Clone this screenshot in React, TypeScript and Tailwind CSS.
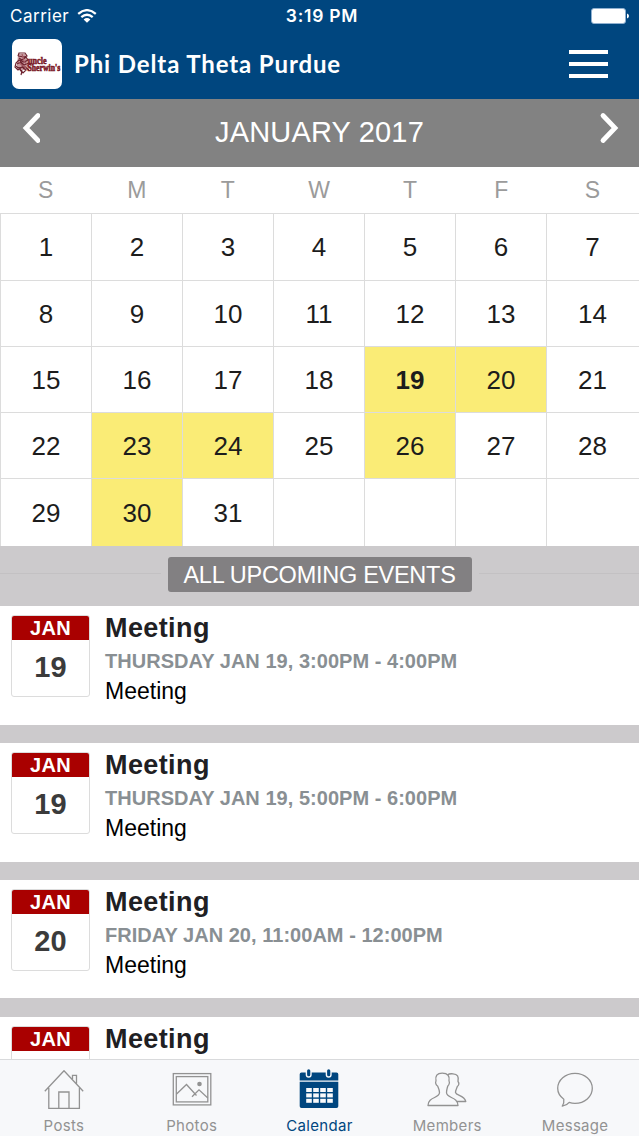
import React from "react";

const WEEKDAYS = ["S", "M", "T", "W", "T", "F", "S"];
const EVENT_DAYS = [19, 20, 23, 24, 26, 30];
const TODAY = 19;

const EVENTS = [
  { day: "19", when: "THURSDAY JAN 19, 3:00PM - 4:00PM" },
  { day: "19", when: "THURSDAY JAN 19, 5:00PM - 6:00PM" },
  { day: "20", when: "FRIDAY JAN 20, 11:00AM - 12:00PM" },
  { day: "23", when: "MONDAY JAN 23, 3:00PM - 4:00PM" },
];

function StatusBar() {
  return (
    <div className="grid h-8 grid-cols-3 items-center pr-[10px] pl-[10px] font-['Inter',sans-serif] text-[17px] text-white">
      <div className="flex items-center">
        <span className="w-[60px] text-[17px] leading-8 tracking-[0.5px] whitespace-nowrap">Carrier</span>
        <svg className="ml-[7px] h-[15px] w-[20px]" viewBox="0 0 20 15" fill="none" stroke="currentColor" strokeWidth="2.3">
          <path d="M1.2 4.9Q10-2.6 18.8 4.9" />
          <path d="M4.3 8.2Q10 3.4 15.7 8.2" />
          <path d="M10 13.8L6.6 10.5Q10 7.6 13.4 10.5Z" fill="currentColor" stroke="none" />
        </svg>
      </div>
      <div className="pl-[5px] text-center text-[17.5px] font-semibold tracking-[0.75px] whitespace-nowrap">3:19 PM</div>
      <div className="flex items-center justify-end">
        <svg className="h-4 w-[38px]" viewBox="0 0 38 16">
          <rect x="0.5" y="0.5" width="34" height="15" rx="2.5" fill="#fff" stroke="#8fb0d0" />
          <path d="M36 5.5Q38 6.2 38 8T36 10.5Z" fill="#fff" />
        </svg>
      </div>
    </div>
  );
}

function Logo() {
  return (
    <svg className="h-[50px] w-[50px]" viewBox="0 0 50 50">
      <rect width="50" height="50" rx="7" fill="#fff" />
      <path d="M6 15H13L15 20L18 24L16 31L10 31L5 27Z" fill="#c99ba0" />
      <g fill="none" stroke="#6e2430" strokeWidth="1.2">
        <path d="M6 17L7 14L13 14L15 17L12 18L6 17M7 19L10 21L14 18L16 21L12 23L7 21L4 24L3 28L6 31L10 28L14 31L11 34L8 31" />
        <path d="M5 25L9 23L12 26L17 24M5 29L13 28L17 31M8 21L12 30M4 27L10 32L9 36" />
        <path d="M10 15L12 22L16 27M6 23L14 29" stroke="#a45a63" />
      </g>
      <g fill="#7b1826" stroke="#7b1826" strokeWidth="0.6" className="font-['Liberation_Serif',serif] font-bold">
        <text transform="translate(16 25) scale(0.78 1)" fontSize="10.5">uncle</text>
        <text transform="translate(15.5 31.8) scale(0.8 1)" fontSize="9.7">Sherwin's</text>
      </g>
    </svg>
  );
}

function Header() {
  return (
    <header className="h-[99px] shrink-0 bg-[#00467f]">
      <StatusBar />
      <div className="flex h-[63px] items-center pr-[31px] pl-3">
        <Logo />
        <h1 className="ml-[12px] flex-1 font-['Lato',sans-serif] text-[24px] font-bold tracking-[0.88px] whitespace-nowrap text-white">
          Phi Delta Theta Purdue
        </h1>
        <div className="flex w-[39px] flex-col gap-[8px]">
          <span className="h-[4px] bg-white" />
          <span className="h-[4px] bg-white" />
          <span className="h-[4px] bg-white" />
        </div>
      </div>
    </header>
  );
}

function Chevron({ right = false }: { right?: boolean }) {
  return (
    <svg className="h-[32px] w-[20px]" viewBox="0 0 20 32" fill="none" stroke="#fff" strokeWidth="4.8" strokeLinecap="round" strokeLinejoin="miter">
      <path d={right ? "M4 3.5L16 16L4 28.5" : "M18 3.5L6 16L18 28.5"} />
    </svg>
  );
}

function MonthBar() {
  return (
    <div className="flex h-[68px] shrink-0 items-center justify-between bg-[#828282] px-[20px] text-white">
      <div className="pb-[11px]"><Chevron /></div>
      <h2 className="pb-[2px] text-[29px] leading-[64px] tracking-[0.17px]">JANUARY 2017</h2>
      <div className="pb-[11px]"><Chevron right /></div>
    </div>
  );
}

function MonthGrid() {
  const cells = Array.from({ length: 35 }, (_, i) => i + 1);
  return (
    <div className="shrink-0 bg-white">
      <div className="grid h-[46px] grid-cols-7 pr-px text-center text-[23px] leading-[46px] text-[#9b9b9b]">
        {WEEKDAYS.map((d, i) => (
          <div key={i}>{d}</div>
        ))}
      </div>
      <div className="grid h-[333px] grid-cols-[91px_91px_91px_91px_91px_91px_92px] grid-rows-[67px_66px_66px_66px_67px] border-t border-l border-[#dcdcdc]">
        {cells.map((n) => (
          <div
            key={n}
            className={[
              "flex items-center justify-center border-[#dcdcdc] pt-px text-[26px] text-[#1c1c1c]",
              n % 7 === 0 ? "pr-px" : "border-r",
              n > 28 ? "" : "border-b",
              EVENT_DAYS.includes(n) ? "bg-[#faec76]" : "",
              n === TODAY ? "font-bold" : "",
            ].join(" ")}
          >
            {n <= 31 ? n : ""}
          </div>
        ))}
      </div>
    </div>
  );
}

function UpcomingBar() {
  return (
    <div className="flex h-[60.4px] shrink-0 items-center gap-[7px]">
      <span className="mb-[5px] h-px flex-1 bg-[#c3c1c3]" />
      <span className="mb-[3px] h-[35px] w-[304px] rounded-[3px] bg-[#828082] text-center text-[23.5px] leading-[36px] tracking-[-0.27px] text-white">
        ALL UPCOMING EVENTS
      </span>
      <span className="mb-[5px] h-px flex-1 bg-[#c3c1c3]" />
    </div>
  );
}

function EventCard({ day, when }: { day: string; when: string }) {
  return (
    <article className="flex h-[118.5px] shrink-0 bg-white pt-[9px] pl-[11px]">
      <div className="h-[82px] w-[79px] shrink-0 overflow-hidden rounded-[3px] border border-[#dcdcdc] text-center font-bold">
        <div className="-mx-px -mt-px h-[25px] bg-[#a90000] text-[20px] leading-[27px] tracking-[0.3px] text-white">JAN</div>
        <div className="text-[29px] leading-[54px] text-[#3b3b3b]">{day}</div>
      </div>
      <div className="ml-[15px] whitespace-nowrap">
        <h3 className="-mt-px text-[27px] leading-[28px] font-bold tracking-[0.4px] text-[#202023]">Meeting</h3>
        <p className="mt-[4px] text-[20px] leading-[30px] font-bold tracking-[0.03px] text-[#898f93]">{when}</p>
        <p className="text-[23px] leading-[30px] text-black">Meeting</p>
      </div>
    </article>
  );
}

function HomeIcon() {
  return (
    <svg className="h-10 w-10" viewBox="0 0 40 40" fill="none" stroke="currentColor" strokeWidth="1.3">
      <path d="M.8 22.3L20 1.8L39.2 22.3M4.8 19V39.4H35.4V19M14.8 39.4V23H25V39.4M28.5 10V6.4H32.5V14.5" />
    </svg>
  );
}

function PhotoIcon() {
  return (
    <svg className="h-10 w-10" viewBox="0 0 40 40" fill="none" stroke="currentColor" strokeWidth="1.3">
      <rect x="1.3" y="4.6" width="37.5" height="31.3" />
      <rect x="4.3" y="7.6" width="31.5" height="25.3" />
      <path d="M4.3 25.3L14.5 15.5L24.5 26.5M20 27.8L27 20.8L35.8 29M20 27.8L22.3 25.5" />
      <circle cx="27.5" cy="15" r="2.3" fill="currentColor" stroke="none" />
    </svg>
  );
}

function CalendarIcon() {
  const xs = [7.2, 14.2, 21.2, 28.2];
  const ys = [19, 24.4, 29.8];
  return (
    <svg className="h-10 w-10" viewBox="0 0 40 40" fill="#00467f">
      <path d="M2.5 3.5H37.5Q39.3 3.5 39.3 5.3V11.5H.7V5.3Q.7 3.5 2.5 3.5ZM.7 12.8H39.3V37.3Q39.3 39 37.5 39H2.5Q.7 39 .7 37.3Z" />
      <path d="M9.7 2V5.7M29.7 2V5.7" stroke="#f8f8fa" strokeWidth="6" strokeLinecap="round" />
      <path d="M9.7 1.8V5.7M29.7 1.8V5.7" stroke="#00467f" strokeWidth="3.2" strokeLinecap="round" />
      <g fill="#fafafb">
        {ys.map((y) => xs.map((x) => <rect key={`${x}-${y}`} x={x} y={y} width="5.6" height="4" />))}
      </g>
    </svg>
  );
}

function MembersIcon() {
  return (
    <svg className="h-10 w-10" viewBox="0 0 40 40" fill="none" stroke="currentColor" strokeWidth="1.3" strokeLinejoin="round">
      <path d="M9 12C8 7 10 4.2 15.2 4.2C20.8 4.2 23 7 22 12C23 13.5 22 16 20.8 17C20 20 19.5 21 19.5 23.5C19.5 29.5 31 27.5 31 36.5H1C1 27.5 12.5 29.5 12.5 23.5C12.5 21 11.5 19.5 10.6 17C9 16 8 13.5 9 12Z" />
      <path d="M20.8 5.8C22 4.4 24 4.8 26 4.8C30.5 5 32 7.5 31 12.5C32.5 14.5 31.5 16.5 30.3 17.5C29.5 20 28.5 21 28.5 23.5C29.5 27 37 26 38.8 32.5H30" />
    </svg>
  );
}

function MessageIcon() {
  return (
    <svg className="h-10 w-10" viewBox="0 0 40 40" fill="none" stroke="currentColor" strokeWidth="1.3" strokeLinejoin="round">
      <path d="M20 4.3C29.7 4.3 37.3 11 37.3 19.3C37.3 27.6 29.7 34.3 20 34.3C18 34.3 16 34 14.2 33.3C12 36 10.3 36.7 7.3 37.2C8.6 35.2 9.2 33 8.8 30.2C5 27.5 2.7 23.7 2.7 19.3C2.7 11 10.3 4.3 20 4.3Z" />
    </svg>
  );
}

const TABS = [
  { label: "Posts", icon: HomeIcon },
  { label: "Photos", icon: PhotoIcon },
  { label: "Calendar", icon: CalendarIcon },
  { label: "Members", icon: MembersIcon },
  { label: "Message", icon: MessageIcon },
];

function TabBar() {
  return (
    <nav className="grid h-[77px] shrink-0 grid-cols-5 border-t border-[#d9dadc] bg-[#f7f8fa]">
      {TABS.map(({ label, icon: Icon }) => (
        <div
          key={label}
          className={`flex flex-col items-center pt-[9px] font-['Inter',sans-serif] ${label === "Calendar" ? "text-[#00467f]" : "text-[#929292]"}`}
        >
          <Icon />
          <span className="mt-[6px] text-[15px] leading-[22px] tracking-[0.3px]">{label}</span>
        </div>
      ))}
    </nav>
  );
}

export default function App() {
  return (
    <div className="flex h-[1136px] w-[639px] flex-col overflow-hidden bg-[#cccacc] font-['Liberation_Sans',Arial,sans-serif]">
      <Header />
      <MonthBar />
      <MonthGrid />
      <UpcomingBar />
      <main className="flex min-h-0 flex-1 flex-col gap-[18.3px] overflow-hidden">
        {EVENTS.map((e, i) => (
          <EventCard key={i} {...e} />
        ))}
      </main>
      <TabBar />
    </div>
  );
}
